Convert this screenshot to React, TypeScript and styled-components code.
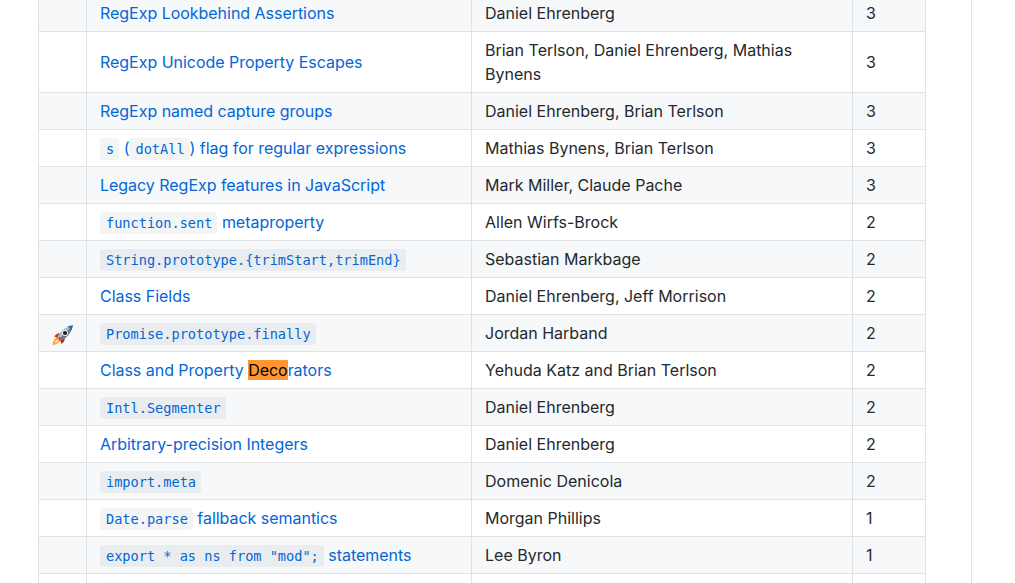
import React, { FC, ReactNode } from 'react';
import styled, { createGlobalStyle } from 'styled-components';

const GlobalStyle = createGlobalStyle`
  html, body {
    margin: 0;
    padding: 0;
    background: #fff;
    overflow: hidden;
  }
`

const Page = styled.div`
  box-sizing: border-box;
  width: 972px;
  height: 583px;
  overflow: hidden;
  border-right: 1px solid #e1e4e8;
  padding-left: 38px;
  font-family: Inter, "Liberation Sans", sans-serif;
  font-size: 16px;
  line-height: 24px;
  color: #24292e;
`

const Table = styled.table`
  border-collapse: collapse;
  table-layout: fixed;
  width: 887px;
  margin-top: -6px;
`

const Row = styled.tr<{ $shaded: boolean }>`
  background-color: ${p => (p.$shaded ? '#f6f8fa' : '#fff')};
`

const Cell = styled.td`
  border: 1px solid #dfe2e5;
  padding: 6px 13px;
  vertical-align: middle;
`

const EmojiCell = styled(Cell)`
  padding: 0;
  line-height: 0;
`

const RocketIcon = styled.svg`
  display: block;
  margin: 4px auto 0;
`

const Link = styled.a`
  color: #0366d6;
  text-decoration: none;
  letter-spacing: -0.03px;
`

const Code = styled.code`
  background-color: rgba(27, 31, 35, 0.05);
  border-radius: 3px;
  padding: 3px 5px 3px 6px;
  font-family: "DejaVu Sans Mono", "Liberation Mono", monospace;
  font-size: 13.6px;
  line-height: 16px;
  letter-spacing: 0;
`

const Mark = styled.span`
  background-color: #ff9632;
  color: #000;
`

const Rocket: FC = () => (
  <RocketIcon width="24" height="24" viewBox="0 0 24 24">
    <path d="M1.5 22 C2 18 3.5 15.5 6.5 14 L9.5 17 C8 20 5.5 21.5 1.5 22Z" fill="#f5a623" />
    <path d="M3.4 20.2 C4 18.2 5 17 6.4 16 L7.8 17.4 C6.8 18.8 5.6 19.8 3.4 20.2Z" fill="#fde28a" />
    <path d="M3 13.5 C5 11 7 10 10 10 L7 16 L5.5 14.2Z" fill="#e0301e" />
    <path d="M10.5 21 C13 19 14 17 14 14 L8 17 L9.8 18.5Z" fill="#c4201a" />
    <path d="M6.5 14.5 C8.5 9 13.5 3.8 21.8 2.2 C20.2 10.5 15 15.5 9.5 17.5Z" fill="#aebccd" />
    <path d="M9.5 17.5 C15 15.5 20.2 10.5 21.8 2.2 L8 16Z" fill="#66788e" />
    <path d="M16.5 3.6 C18.2 3 20 2.5 21.8 2.2 C21.5 4 21 5.8 20.4 7.5 C19.6 5.8 18.2 4.4 16.5 3.6Z" fill="#2f6ba8" />
    <circle cx="14" cy="10" r="3" fill="#e8edf2" />
    <circle cx="14" cy="10" r="2.1" fill="#1a2028" />
    <path d="M7.5 15.5 L8.5 16.5 L10 15.5 L8.5 14Z" fill="#c4201a" />
  </RocketIcon>
)

interface Proposal {
  title: ReactNode
  authors?: string
  stage?: number
  launched?: boolean
}

const proposals: Proposal[] = [
  { title: 'RegExp Lookbehind Assertions', authors: 'Daniel Ehrenberg', stage: 3 },
  { title: 'RegExp Unicode Property Escapes', authors: 'Brian Terlson, Daniel Ehrenberg, Mathias Bynens', stage: 3 },
  { title: 'RegExp named capture groups', authors: 'Daniel Ehrenberg, Brian Terlson', stage: 3 },
  { title: <><Code>s</Code> (<Code>dotAll</Code>) flag for regular expressions</>, authors: 'Mathias Bynens, Brian Terlson', stage: 3 },
  { title: 'Legacy RegExp features in JavaScript', authors: 'Mark Miller, Claude Pache', stage: 3 },
  { title: <><Code>function.sent</Code> metaproperty</>, authors: 'Allen Wirfs-Brock', stage: 2 },
  { title: <Code>{'String.prototype.{trimStart,trimEnd}'}</Code>, authors: 'Sebastian Markbage', stage: 2 },
  { title: 'Class Fields', authors: 'Daniel Ehrenberg, Jeff Morrison', stage: 2 },
  { title: <Code>Promise.prototype.finally</Code>, authors: 'Jordan Harband', stage: 2, launched: true },
  { title: <>Class and Property <Mark>Deco</Mark>rators</>, authors: 'Yehuda Katz and Brian Terlson', stage: 2 },
  { title: <Code>Intl.Segmenter</Code>, authors: 'Daniel Ehrenberg', stage: 2 },
  { title: 'Arbitrary-precision Integers', authors: 'Daniel Ehrenberg', stage: 2 },
  { title: <Code>import.meta</Code>, authors: 'Domenic Denicola', stage: 2 },
  { title: <><Code>Date.parse</Code> fallback semantics</>, authors: 'Morgan Phillips', stage: 1 },
  { title: <><Code>export * as ns from "mod";</Code> statements</>, authors: 'Lee Byron', stage: 1 },
  { title: <Code>Array.prototype.flat</Code> },
]

const App: FC = () => (
  <>
    <GlobalStyle />
    <Page>
      <Table>
        <colgroup>
          <col width="48" />
          <col width="385" />
          <col width="381" />
          <col width="73" />
        </colgroup>
        <tbody>
          {proposals.map((p, i) => (
            <Row key={i} $shaded={i % 2 === 0}>
              <EmojiCell>{p.launched && <Rocket />}</EmojiCell>
              <Cell><Link href="#">{p.title}</Link></Cell>
              <Cell>{p.authors}</Cell>
              <Cell>{p.stage}</Cell>
            </Row>
          ))}
        </tbody>
      </Table>
    </Page>
  </>
)

export default App
